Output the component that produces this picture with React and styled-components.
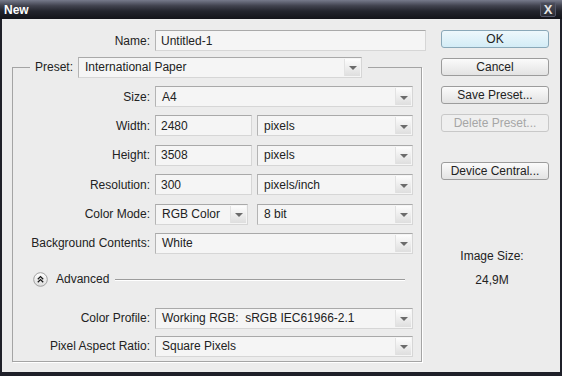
import React from "react";
import styled, { createGlobalStyle } from "styled-components";

const GlobalStyle = createGlobalStyle`
    html, body {
        margin: 0;
        padding: 0;
        background: #ececec;
    }

    body {
        font-family: "Liberation Sans", Arial, sans-serif;
        font-size: 12px;
        color: #222222;
    }
`;

const Window = styled.div`
    width: 562px;
    height: 376px;
    display: flex;
    flex-direction: column;
    box-sizing: border-box;
`;

const TitleBar = styled.div`
    height: 19px;
    flex: none;
    display: flex;
    flex-direction: row;
    align-items: center;
    justify-content: space-between;
    padding: 0 6px 0 4px;
    background: linear-gradient(to bottom, #767a8b 0%, #41434f 30%, #23252d 58%, #131419 100%);
    color: #ffffff;
    font-weight: bold;
    font-size: 12px;
`;

const CloseButton = styled.div`
    width: 16px;
    height: 15px;
    box-sizing: border-box;
    display: flex;
    align-items: center;
    justify-content: center;
    border: 1px solid #55586a;
    border-radius: 2px;
    background: linear-gradient(to bottom, #4a4d5a, #2a2c34);
    color: #e4e4e4;
    font-size: 13px;
    font-weight: bold;
`;

const Body = styled.div`
    flex: 1;
    display: flex;
    flex-direction: row;
    gap: 15px;
    padding: 11px 11px 0 10px;
    background: #ececec;
    border-left: 2px solid #1f2029;
    border-right: 2px solid #1f2029;
    border-bottom: 4px solid #1f2029;
`;

const Main = styled.div`
    width: 414px;
    display: flex;
    flex-direction: column;
`;

const Side = styled.div`
    width: 108px;
    display: flex;
    flex-direction: column;
`;

const Row = styled.div`
    display: grid;
    grid-template-columns: ${(p) => p.$labelWidth}px 1fr;
    column-gap: 5px;
    align-items: center;
    height: 21px;
`;

const Label = styled.span`
    text-align: right;
    white-space: nowrap;
`;

const FieldBox = styled.div`
    position: relative;
    width: ${(p) => (p.$w ? `${p.$w}px` : "100%")};
    height: 21px;
    box-sizing: border-box;
    display: flex;
    align-items: center;
    padding-left: ${(p) => (p.$select ? 6 : 5)}px;
    background: #f5f5f5;
    border: 1px solid;
    border-color: #a9a9a9 #d6d6d6 #d6d6d6 #b4b4b4;
    white-space: pre;
`;

const ArrowButton = styled.div`
    position: absolute;
    top: 1px;
    right: 1px;
    bottom: 1px;
    width: 15px;
    display: flex;
    align-items: center;
    justify-content: center;
    background: linear-gradient(to bottom, #fdfdfd, #dedede);
    border-left: 1px solid #e2e2e2;

    &::after {
        content: "";
        margin-top: 2px;
        border-left: 4px solid transparent;
        border-right: 4px solid transparent;
        border-top: 4px solid #6b6b6b;
    }
`;

const Pair = styled.div`
    display: flex;
    flex-direction: row;
    justify-content: space-between;
`;

const Group = styled.fieldset`
    width: 410px;
    box-sizing: border-box;
    margin: 5px 0 0 0;
    padding: 0 8px 4px 0;
    border: 1px solid #a4a4a4;
    box-shadow: 1px 1px 0 #ffffff;
    min-width: 0;
`;

const Legend = styled.legend`
    margin-left: 17px;
    padding: 0 6px 0 5px;
    display: flex;
    flex-direction: row;
    align-items: center;
    gap: 5px;
    height: 22px;
`;

const FieldList = styled.div`
    display: flex;
    flex-direction: column;
    gap: ${(p) => p.$gap}px;
    padding-top: ${(p) => p.$top || 0}px;
`;

const AdvancedRow = styled.div`
    display: flex;
    flex-direction: row;
    align-items: center;
    height: 15px;
    margin-top: 18px;
    padding-left: 20px;
    padding-right: 8px;
    gap: 8px;
`;

const Rule = styled.div`
    flex: 1;
    height: 1px;
    margin-left: -2px;
    background: #9c9c9c;
    box-shadow: 0 1px 0 #ffffff;
`;

const Button = styled.div`
    height: 18px;
    box-sizing: border-box;
    display: flex;
    align-items: center;
    justify-content: center;
    border: 1px solid ${(p) => (p.$primary ? "#8aa8b8" : p.$disabled ? "#c8c8c8" : "#9c9c9c")};
    border-radius: 3px;
    background: ${(p) =>
        p.$primary
            ? "linear-gradient(to bottom, #eef8fc, #d3ecf6)"
            : p.$disabled
            ? "#efefef"
            : "linear-gradient(to bottom, #fbfbfb, #e3e3e3)"};
    color: ${(p) => (p.$disabled ? "#a6a6a6" : "#222222")};
    margin-top: ${(p) => p.$top || 0}px;
`;

const ButtonStack = styled.div`
    display: flex;
    flex-direction: column;
    gap: 10px;
`;

const SizeInfo = styled.div`
    margin-top: 64px;
    display: flex;
    flex-direction: column;
    align-items: center;
    line-height: 24px;
    padding-right: 6px;
`;

const Field = ({ value, w }) => <FieldBox $w={w}>{value}</FieldBox>;

const Select = ({ value, w }) => (
    <FieldBox $w={w} $select>
        {value}
        <ArrowButton />
    </FieldBox>
);

const AdvancedIcon = () => (
    <svg width="15" height="15" viewBox="0 0 15 15">
        <defs>
            <linearGradient id="adv" x1="0" y1="0" x2="0" y2="1">
                <stop offset="0" stopColor="#ffffff" />
                <stop offset="1" stopColor="#dcdcdc" />
            </linearGradient>
        </defs>
        <circle cx="7.5" cy="7.5" r="6.8" fill="url(#adv)" stroke="#a0a0a0" />
        <polyline points="4.8,7.3 7.5,4.6 10.2,7.3" fill="none" stroke="#1a1a1a" strokeWidth="1.3" />
        <polyline points="4.8,10.3 7.5,7.6 10.2,10.3" fill="none" stroke="#1a1a1a" strokeWidth="1.3" />
    </svg>
);

const App = () => (
    <Window>
        <GlobalStyle />
        <TitleBar>
            <span>{"New"}</span>
            <CloseButton>{"X"}</CloseButton>
        </TitleBar>
        <Body>
            <Main>
                <Row $labelWidth={138}>
                    <Label>{"Name:"}</Label>
                    <Field value="Untitled-1" />
                </Row>
                <Group>
                    <Legend>
                        <Label>{"Preset:"}</Label>
                        <Select value="International Paper" w={284} />
                    </Legend>
                    <FieldList $gap={8.4} $top={8}>
                        <Row $labelWidth={137}>
                            <Label>{"Size:"}</Label>
                            <Select value="A4" />
                        </Row>
                        <Row $labelWidth={137}>
                            <Label>{"Width:"}</Label>
                            <Pair>
                                <Field value="2480" w={97} />
                                <Select value="pixels" w={156} />
                            </Pair>
                        </Row>
                        <Row $labelWidth={137}>
                            <Label>{"Height:"}</Label>
                            <Pair>
                                <Field value="3508" w={97} />
                                <Select value="pixels" w={156} />
                            </Pair>
                        </Row>
                        <Row $labelWidth={137}>
                            <Label>{"Resolution:"}</Label>
                            <Pair>
                                <Field value="300" w={97} />
                                <Select value="pixels/inch" w={156} />
                            </Pair>
                        </Row>
                        <Row $labelWidth={137}>
                            <Label>{"Color Mode:"}</Label>
                            <Pair>
                                <Select value="RGB Color" w={93} />
                                <Select value="8 bit" w={156} />
                            </Pair>
                        </Row>
                        <Row $labelWidth={137}>
                            <Label>{"Background Contents:"}</Label>
                            <Select value="White" />
                        </Row>
                    </FieldList>
                    <AdvancedRow>
                        <AdvancedIcon />
                        <span>{"Advanced"}</span>
                        <Rule />
                    </AdvancedRow>
                    <FieldList $gap={7} $top={21}>
                        <Row $labelWidth={137}>
                            <Label>{"Color Profile:"}</Label>
                            <Select value="Working RGB:  sRGB IEC61966-2.1" />
                        </Row>
                        <Row $labelWidth={137}>
                            <Label>{"Pixel Aspect Ratio:"}</Label>
                            <Select value="Square Pixels" />
                        </Row>
                    </FieldList>
                </Group>
            </Main>
            <Side>
                <ButtonStack>
                    <Button $primary>{"OK"}</Button>
                    <Button>{"Cancel"}</Button>
                    <Button>{"Save Preset..."}</Button>
                    <Button $disabled>{"Delete Preset..."}</Button>
                    <Button $top={20}>{"Device Central..."}</Button>
                </ButtonStack>
                <SizeInfo>
                    <span>{"Image Size:"}</span>
                    <span>{"24,9M"}</span>
                </SizeInfo>
            </Side>
        </Body>
    </Window>
);

export default App;
